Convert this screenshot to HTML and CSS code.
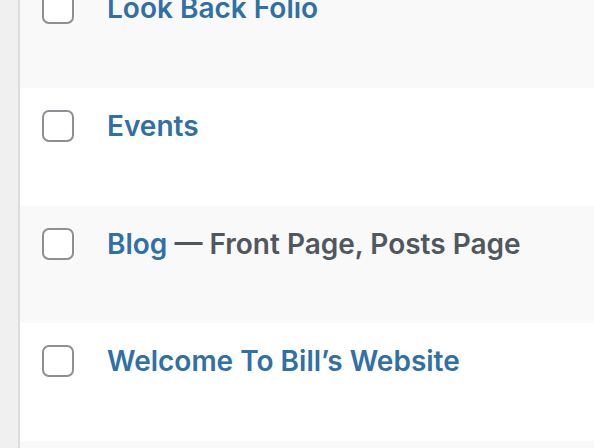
FILE: index.html
```html
<!DOCTYPE html>
<html lang="en">
<head>
<meta charset="utf-8">
<title>Pages</title>
<link rel="stylesheet" href="styles.css">
</head>
<body>
<div class="screen">
  <div class="sidebar"></div>
  <div class="table">
    <div class="row alt">
      <span class="check"></span>
      <span class="title"><a class="link">Look Back Folio</a></span>
    </div>
    <div class="row">
      <span class="check"></span>
      <span class="title"><a class="link">Events</a></span>
    </div>
    <div class="row alt">
      <span class="check"></span>
      <span class="title"><a class="link">Blog</a><span class="state"> — Front Page, Posts Page</span></span>
    </div>
    <div class="row">
      <span class="check"></span>
      <span class="title"><a class="link">Welcome To Bill’s Website</a></span>
    </div>
    <div class="row alt"></div>
  </div>
</div>
</body>
</html>
```

FILE: styles.css
```css
html, body {
  margin: 0;
  padding: 0;
  height: 100%;
  overflow: hidden;
  background: #ffffff;
}

.screen {
  display: flex;
  height: 100%;
  font-family: Inter, "Noto Sans", sans-serif;
}

.sidebar {
  width: 18px;
  flex: none;
  background: #f0f0f1;
  border-right: 2px solid #dcdcde;
}

.table {
  flex: 1;
  display: flex;
  flex-direction: column;
  margin-top: -29.67px;
}

.row {
  height: 117.67px;
  flex: none;
  box-sizing: border-box;
  padding: 22px 0 0 22px;
  display: flex;
  align-items: flex-start;
  gap: 33px;
  background: #ffffff;
}

.row.alt {
  background: #f9f9f9;
}

.check {
  width: 32px;
  height: 32px;
  box-sizing: border-box;
  border: 2px solid #8c8f94;
  border-radius: 7px;
  background: #ffffff;
  flex: none;
}

.title {
  font-size: 28px;
  font-weight: 600;
  line-height: 32px;
  white-space: nowrap;
}

.link {
  color: #3170a6;
}

.state {
  color: #50575e;
}
```
